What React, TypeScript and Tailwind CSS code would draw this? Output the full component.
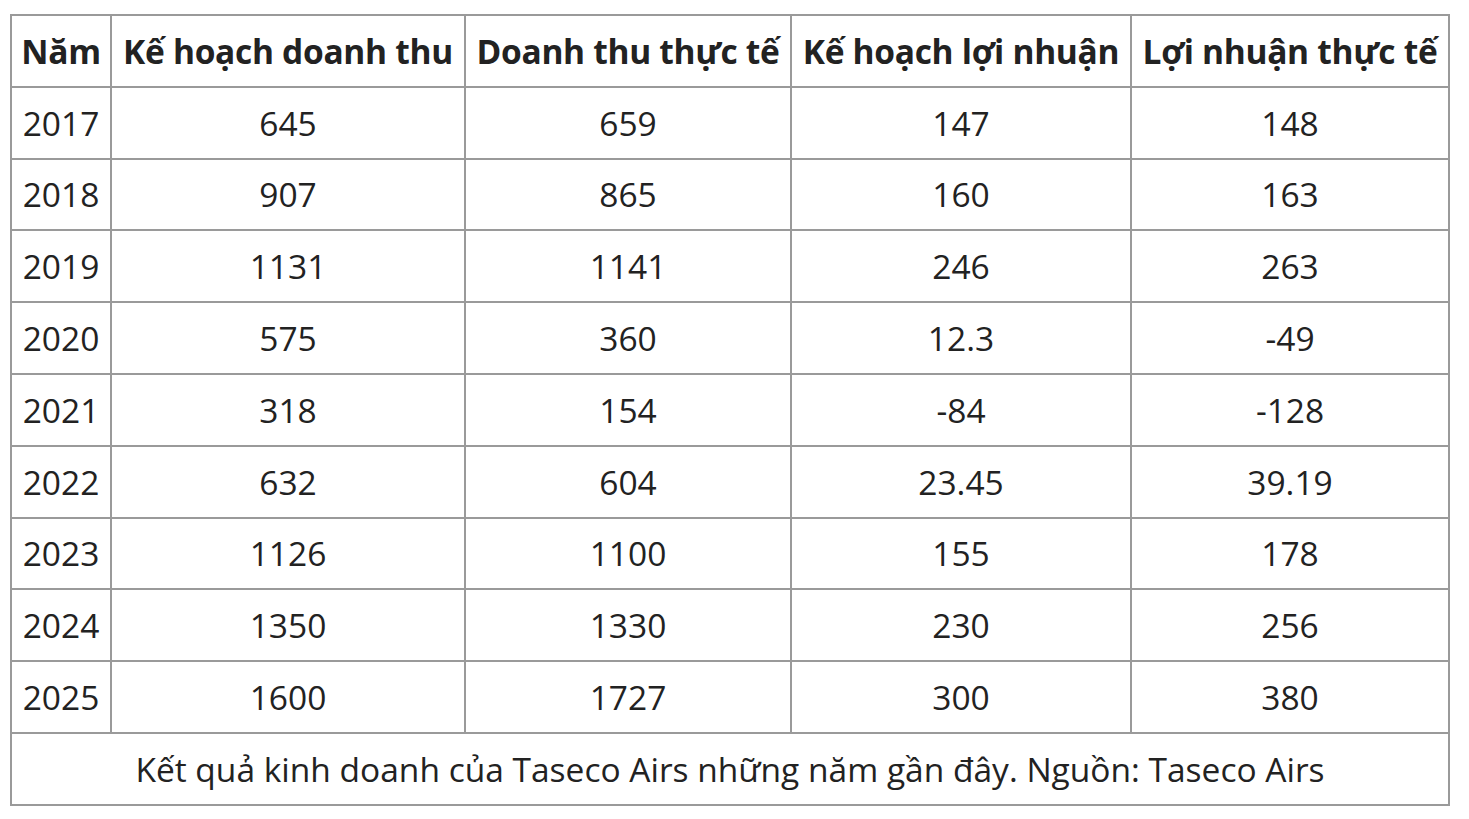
const HEAD = ['Năm', 'Kế hoạch doanh thu', 'Doanh thu thực tế', 'Kế hoạch lợi nhuận', 'Lợi nhuận thực tế'];

const ROWS: string[][] = [
  ['2017', '645', '659', '147', '148'],
  ['2018', '907', '865', '160', '163'],
  ['2019', '1131', '1141', '246', '263'],
  ['2020', '575', '360', '12.3', '-49'],
  ['2021', '318', '154', '-84', '-128'],
  ['2022', '632', '604', '23.45', '39.19'],
  ['2023', '1126', '1100', '155', '178'],
  ['2024', '1350', '1330', '230', '256'],
  ['2025', '1600', '1727', '300', '380'],
];

export default function App() {
  return (
    <div
      className="min-h-screen bg-white pl-[10px] pt-[14px] text-[#222]"
      style={{ fontFamily: '"Open Sans", "Noto Sans", sans-serif' }}
    >
      <table className="table-fixed border-collapse w-[1440px] text-[33.5px]">
        <colgroup>
          <col className="w-[100px]" />
          <col className="w-[354px]" />
          <col className="w-[326px]" />
          <col className="w-[340px]" />
          <col />
        </colgroup>
        <thead>
          <tr className="h-[71.8px]">
            {HEAD.map((h) => (
              <th
                key={h}
                className="border-2 border-[#9a9a9a] px-0 font-bold whitespace-nowrap text-center tracking-[-0.3px]"
              >
                {h}
              </th>
            ))}
          </tr>
        </thead>
        <tbody>
          {ROWS.map((r) => (
            <tr key={r[0]} className="h-[71.8px]">
              {r.map((c, i) => (
                <td key={i} className="border-2 border-[#9a9a9a] text-center">
                  {c}
                </td>
              ))}
            </tr>
          ))}
          <tr className="h-[71.8px]">
            <td colSpan={5} className="border-2 border-[#9a9a9a] text-center">
              Kết quả kinh doanh của Taseco Airs những năm gần đây. Nguồn: Taseco Airs
            </td>
          </tr>
        </tbody>
      </table>
    </div>
  );
}
